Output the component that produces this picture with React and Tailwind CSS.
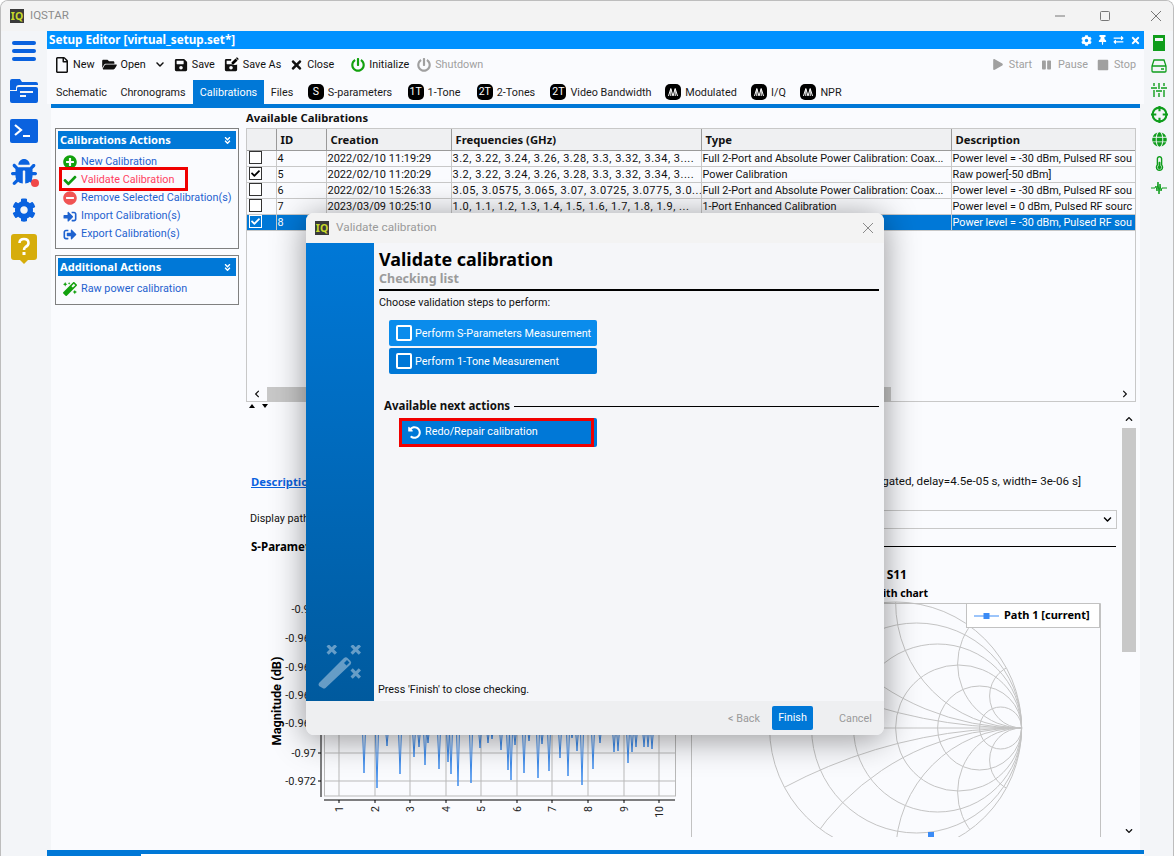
import React from "react";
import {
  FaBug, FaCog, FaPlusCircle, FaCheck, FaMinusCircle, FaSignInAlt, FaSignOutAlt, FaMagic,
  FaRegFile, FaFolderOpen, FaSave, FaTimes, FaPowerOff, FaPlay, FaPause, FaStop, FaPen,
  FaAngleDoubleDown, FaChevronDown, FaThermometerHalf, FaGlobe, FaExchangeAlt, FaThumbtack,
  FaUndoAlt, FaChevronLeft, FaChevronRight, FaChevronUp,
} from "react-icons/fa";

const rows = [
  { id: 4, on: false, date: "2022/02/10 11:19:29", freq: "3.2, 3.22, 3.24, 3.26, 3.28, 3.3, 3.32, 3.34, 3....", type: "Full 2-Port and Absolute Power Calibration: Coax...", desc: "Power level = -30 dBm, Pulsed RF sou" },
  { id: 5, on: true, date: "2022/02/10 11:20:29", freq: "3.2, 3.22, 3.24, 3.26, 3.28, 3.3, 3.32, 3.34, 3....", type: "Power Calibration", desc: "Raw power[-50 dBm]" },
  { id: 6, on: false, date: "2022/02/10 15:26:33", freq: "3.05, 3.0575, 3.065, 3.07, 3.0725, 3.0775, 3.0...", type: "Full 2-Port and Absolute Power Calibration: Coax...", desc: "Power level = -30 dBm, Pulsed RF sou" },
  { id: 7, on: false, date: "2023/03/09 10:25:10", freq: "1.0, 1.1, 1.2, 1.3, 1.4, 1.5, 1.6, 1.7, 1.8, 1.9, ...", type: "1-Port Enhanced Calibration", desc: "Power level = 0 dBm, Pulsed RF sourc" },
  { id: 8, on: true, sel: true, date: "2023/03/09 10:40:12", freq: "1.0, 1.1, 1.2, 1.3", type: "Full 2-Port", desc: "Power level = -30 dBm, Pulsed RF sou" },
];
const cellText = ["", "text-[11px]", "tracking-[0.5px] text-[11px]", "", ""];

// spike tips read off the reference, in page coordinates
const spikes = [
  [364, 772], [377, 787], [387, 745], [400, 773], [414, 756], [419, 746], [425, 764], [428, 742], [439, 768], [448, 761],
  [451, 773], [458, 785], [471, 782], [480, 747], [488, 742], [492, 738], [501, 749], [508, 769], [511, 779], [515, 744],
  [524, 772], [529, 740], [538, 777], [542, 743], [549, 770], [560, 757], [568, 775], [572, 737], [577, 750], [582, 784],
  [593, 768], [600, 742], [614, 751], [618, 750], [628, 762], [632, 751], [636, 746], [644, 746], [648, 746], [652, 748],
];
const spikeLine = spikes.map(([x, y]) => `${x - 1.5},728 ${x},${y} ${x + 1.5},728`).join(" ");

const yLabels = [["-0.96", 608], ["-0.968", 637], ["-0.968", 666], ["-0.968", 694], ["-0.968", 722], ["-0.97", 752], ["-0.972", 780]];
const xTicks = [339, 375, 410, 446, 481, 517, 552, 588, 624, 659];

const CX = 1021.6;
const CY = 727;

function LeftChart() {
  return (
    <svg viewBox="270 600 421 237" className="w-[421px] h-[237px] block">
      <rect x="324.5" y="600" width="351" height="195" fill="none" stroke="#b9b9b9" strokeWidth="1" />
      {xTicks.map((x) => <line key={x} x1={x} x2={x} y1="600" y2="795" stroke="#b9b9b9" />)}
      {yLabels.map(([, y], i) => <line key={i} x1="324" x2="675" y1={y} y2={y} stroke="#b9b9b9" />)}
      <polyline points={spikeLine} fill="none" stroke="#3f8ceb" strokeWidth="1" />
      <line x1="321" x2="321" y1="600" y2="796" stroke="#000" />
      <line x1="324" x2="675" y1="799" y2="799" stroke="#000" />
      {yLabels.map(([t, y], i) => (
        <g key={i}>
          <line x1="318" x2="321" y1={y} y2={y} stroke="#000" />
          <text x="316" y={y + 4} textAnchor="end" fontSize="11" fill="#222">{t}</text>
        </g>
      ))}
      {xTicks.map((x, i) => (
        <g key={x}>
          <line x1={x} x2={x} y1="799" y2="802" stroke="#000" />
          <text transform={`translate(${x + 4} 805) rotate(-90)`} textAnchor="end" fontSize="10.5" fill="#222">{i + 1}</text>
        </g>
      ))}
      <text transform="translate(281 700) rotate(-90)" textAnchor="middle" fontSize="12.800" fontWeight="700" fill="#000">Magnitude (dB)</text>
    </svg>
  );
}

function SmithChart() {
  const rs = [126, 105, 84, 63, 42, 21];
  const xs = [32, 64, 126, 252, 504];
  return (
    <svg viewBox="691 600 430 237" className="w-[430px] h-[237px] block">
      <defs>
        <clipPath id="outer"><circle cx={CX - 126} cy={CY} r="126" /></clipPath>
      </defs>
      <path d="M691.5 837V602.5H1100.5V837" fill="none" stroke="#c2c2c2" />
      <line x1={CX - 252} x2={CX} y1={CY} y2={CY} stroke="#c4c4c4" />
      {rs.map((r) => <circle key={r} cx={CX - r} cy={CY} r={r} fill="none" stroke="#c4c4c4" />)}
      <g clipPath="url(#outer)">
        {xs.map((r) => (
          <g key={r}>
            <circle cx={CX} cy={CY - r} r={r} fill="none" stroke="#c4c4c4" />
            <circle cx={CX} cy={CY + r} r={r} fill="none" stroke="#c4c4c4" />
          </g>
        ))}
      </g>
      <rect x="928" y="831" width="6" height="6" fill="#3b8bf5" />
    </svg>
  );
}

function Waves() {
  return (
    <svg viewBox="0 0 16 16" className="w-4 h-4">
      <path d="M3.500 12 5.800 4.500 8 12 10.200 4.500 12.500 12M5.800 5v7M10.200 5v7" fill="none" stroke="#fff" strokeWidth="1" />
    </svg>
  );
}

function Badge({ children }) {
  return <span className="w-4 h-4 rounded-[5px] bg-black text-white text-[10.5px] leading-4 text-center flex items-center justify-center shrink-0">{children}</span>;
}

function Tab({ badge, children, active, width }) {
  return (
    <div className={`${width} h-full flex items-center justify-center gap-[4px] shrink-0 whitespace-nowrap ${active ? "bg-[#0078d7] text-white" : "text-[#1a1a1a]"}`}>
      {badge && <Badge>{badge}</Badge>}
      <span className="mt-[2px]">{children}</span>
    </div>
  );
}

function ActionBox({ title, height, children }) {
  return (
    <div className={`${height} border border-[#808080] p-[2px]`}>
      <div className="h-[18px] bg-[#0078d7] text-white font-['Noto_Sans',sans-serif] font-bold text-[11.1px] flex items-center justify-between pl-[2px] pr-[4px]">
        <span>{title}</span>
        <FaAngleDoubleDown className="w-[9px] h-[9px]" />
      </div>
      <div className="pt-[4px]">{children}</div>
    </div>
  );
}

function Action({ icon, children, hot }) {
  return (
    <div className={`h-[18px] flex items-center gap-[4px] pl-[4px] whitespace-nowrap ${hot ? "text-[#ff3f62]" : "text-[#1e62cf]"}`}>
      <span className="w-[15px] flex justify-center shrink-0">{icon}</span>
      <span>{children}</span>
    </div>
  );
}

function Check({ on, sel }) {
  return (
    <span className={`block w-[13px] h-[13px] border ${sel ? "border-white bg-[#0078d7] text-white" : "border-[#333] bg-white text-black"} flex items-center justify-center`}>
      {on && <FaCheck className="w-[9px] h-[9px]" />}
    </span>
  );
}

function Tool({ icon, label, dim, className }) {
  return (
    <div className={`flex items-center gap-[4px] shrink-0 ${dim ? "text-[#a0a0a0]" : "text-[#111]"} ${className}`}>
      {icon}
      <span className="mt-[2px]">{label}</span>
    </div>
  );
}

function Logo() {
  return (
    <span className="w-[14px] h-[14px] bg-[#3a3a3a] text-[#c9d92a] font-['Noto_Sans',sans-serif] text-[10.5px] leading-[14px] font-bold flex items-center justify-center shrink-0">IQ</span>
  );
}

function StepButton({ label, bg }) {
  return (
    <div className={`w-[208px] h-[26px] rounded-[2px] ${bg} text-white flex items-center pl-[7px] gap-[3px] whitespace-nowrap`}>
      <span className="w-4 h-4 border-2 border-white rounded-[2px] shrink-0" />
      <span className="mt-[2px]">{label}</span>
    </div>
  );
}

function Modal() {
  return (
    <div className="absolute left-[306px] top-[213px] w-[578px] h-[522px] rounded-[8px] overflow-hidden bg-[#f5f6f9] shadow-[0_4px_34px_rgba(0,0,0,0.42)] flex flex-col">
      <div className="h-[30px] bg-[#f3f3f3] flex items-center pl-[9px] pr-[10px] gap-[7px] shrink-0">
        <Logo />
        <span className="text-[11.8px] text-[#9a9a9a]">Validate calibration</span>
        <svg viewBox="0 0 12 12" className="w-3 h-3 ml-auto"><path d="M1 1l10 10M11 1 1 11" stroke="#8a8a8a" fill="none" /></svg>
      </div>
      <div className="flex-1 flex min-h-0">
        <div className="w-[68px] bg-gradient-to-b from-[#0078d7] to-[#005a9e] flex items-end justify-center pb-[12px] shrink-0">
          <svg viewBox="0 0 44 44" className="w-[44px] h-[44px] text-white/40" fill="currentColor">
            <path d="M2 6l3-3 4 4 4-4 3 3-4 4 4 4-3 3-4-4-4 4-3-3 4-4z" transform="translate(7 -3) scale(.75)" />
            <path d="M2 6l3-3 4 4 4-4 3 3-4 4 4 4-3 3-4-4-4 4-3-3 4-4z" transform="translate(31 -3) scale(.75)" />
            <path d="M2 6l3-3 4 4 4-4 3 3-4 4 4 4-3 3-4-4-4 4-3-3 4-4z" transform="translate(31 21) scale(.75)" />
            <path d="M1 38 26 13q2-1.500 3.500 0l3 3q1.500 1.500 0 3.500L7.500 43q-1.500 1-3 0L1 41q-1-1.500 0-3zM26 18l2.500 2.500 3-3L29 15z" fillRule="evenodd" />
          </svg>
        </div>
        <div className="flex-1 flex flex-col px-[5px] min-w-0">
          <div className="font-['Noto_Sans',sans-serif] text-[17.9px] leading-[24px] font-bold text-black mt-[4px]">Validate calibration</div>
          <div className="font-['Noto_Sans',sans-serif] text-[12.5px] leading-[14px] font-bold text-[#9b9b9b] mt-[1px]">Checking list</div>
          <div className="h-[2px] bg-black mt-[3px] shrink-0" />
          <div className="leading-[15px] text-[#111] mt-[4px]">Choose validation steps to perform:</div>
          <div className="flex flex-col gap-[2px] mt-[10px] ml-[10px]">
            <StepButton label="Perform S-Parameters Measurement" bg="bg-[#0a8cec]" />
            <StepButton label="Perform 1-Tone Measurement" bg="bg-[#0078d7]" />
          </div>
          <div className="flex items-center gap-[4px] ml-[5px] mt-[25px] h-[14px]">
            <span className="font-['Noto_Sans',sans-serif] text-[11.5px] font-bold text-[#111]">Available next actions</span>
            <span className="flex-1 h-px bg-black" />
          </div>
          <div className="relative mt-[5px] ml-[20px] w-[198px] h-[29px] bg-[#0078d7] rounded-[2px] text-white flex items-center gap-[4px] pl-[9px]">
            <FaUndoAlt className="w-[13px] h-[13px]" />
            <span className="-mt-[1px]">Redo/Repair calibration</span>
            <span className="absolute left-0 top-0 w-[195px] h-[29px] border-[3px] border-[#f00000]" />
          </div>
          <div className="mt-auto leading-[15px] text-[#111] mb-[4px] -ml-[1px]">Press 'Finish' to close checking.</div>
        </div>
      </div>
      <div className="h-[34px] bg-[#eeeff1] shrink-0 flex items-center text-[#9a9a9a] whitespace-nowrap">
        <span className="ml-[422px] w-[32px] mt-[2px]">&lt; Back</span>
        <span className="ml-[12px] w-[41px] h-[24px] rounded-[2px] bg-[#0078d7] text-white flex items-center justify-center">Finish</span>
        <span className="ml-[26px] mt-[2px]">Cancel</span>
      </div>
    </div>
  );
}

export default function App() {
  return (
    <div className="relative w-[1174px] h-[856px] overflow-hidden bg-white font-['Roboto','Liberation_Sans',sans-serif] text-[10.8px] text-[#111]">
      <div className="h-full flex flex-col rounded-t-[8px] border-t border-x border-[#bdbdbd] bg-[#f3f5f8] overflow-hidden">
        {/* title bar */}
        <div className="h-[30px] bg-[#f3f3f3] flex items-center pl-[9px] shrink-0">
          <Logo />
          <span className="ml-[6px] text-[11.5px] text-[#8c8c8c]">IQSTAR</span>
          <div className="ml-auto flex items-center text-[#777]">
            <svg viewBox="0 0 10 10" className="w-[10px] h-[10px] mr-[35px]"><path d="M0 5h10" stroke="currentColor" /></svg>
            <svg viewBox="0 0 10 10" className="w-[10px] h-[10px] mr-[41px]"><rect x=".5" y=".5" width="9" height="9" rx="1" fill="none" stroke="currentColor" /></svg>
            <svg viewBox="0 0 10 10" className="w-[10px] h-[10px] mr-[12px]"><path d="M0 0l10 10M10 0 0 10" stroke="currentColor" /></svg>
          </div>
        </div>

        <div className="flex-1 flex min-h-0">
          {/* left rail */}
          <div className="w-[46px] shrink-0 flex flex-col items-center text-[#0a62df] pr-[1px]">
            <svg viewBox="0 0 24 20" className="w-6 h-5 mt-[10px]" fill="currentColor">
              <rect y="0" width="24" height="4" rx="2" /><rect y="8" width="24" height="4" rx="2" /><rect y="16" width="24" height="4" rx="2" />
            </svg>
            <svg viewBox="0 0 28 24" className="w-7 h-6 mt-[18px]" fill="currentColor">
              <path d="M0 2q0-2 2-2h8l2 3h14q2 0 2 2v1H9q-3 0-3 3v2H0z" />
              <path d="M0 12h7V9q0-1 2-1h17q2 0 2 2v12q0 2-2 2H2q-2 0-2-2zM10 12v2h13v-2zM10 16v2h6v-2z" fillRule="evenodd" />
            </svg>
            <svg viewBox="0 0 28 24" className="w-7 h-6 mt-[16px]">
              <rect width="28" height="24" rx="2" fill="currentColor" />
              <path d="M5 6l6 5-6 5" stroke="#fff" strokeWidth="2.200" fill="none" />
              <path d="M13 17h7" stroke="#fff" strokeWidth="2" />
            </svg>
            <div className="relative mt-[15px] w-7 h-7 flex items-center justify-center">
              <FaBug className="w-[26px] h-[26px]" />
              <span className="absolute -right-[1px] -bottom-[1px] w-2 h-2 rounded-full bg-[#f04848]" />
            </div>
            <FaCog className="w-6 h-6 mt-[12px]" />
            <svg viewBox="0 0 26 30" className="w-[26px] h-[30px] mt-[12px]">
              <path d="M3 0h20q3 0 3 3v20q0 3-3 3h-6l-4 4-4-4H3q-3 0-3-3V3q0-3 3-3z" fill="#d6ad0b" />
              <path d="M8.500 9q0-4 4.500-4t4.500 4q0 2.500-3 4-1.500 1-1.500 3" stroke="#fff" strokeWidth="2.600" fill="none" />
              <rect x="11.500" y="18" width="3" height="3" fill="#fff" />
            </svg>
          </div>

          {/* centre */}
          <div className="flex-1 min-w-0 flex flex-col">
            <div className="h-[18px] bg-[#0091ff] text-white font-['Noto_Sans',sans-serif] font-bold text-[11.7px] flex items-center pl-[2px] pr-[3px] shrink-0">
              <span>Setup Editor [virtual_setup.set*]</span>
              <div className="ml-auto flex items-center gap-[6px]">
                <FaCog className="w-[11px] h-[11px]" />
                <FaThumbtack className="w-[9px] h-[10px]" />
                <FaExchangeAlt className="w-[11px] h-[10px]" />
                <FaTimes className="w-[11px] h-[11px]" />
              </div>
            </div>

            <div className="h-[31px] bg-[#fafbfe] flex items-center pl-[8px] pr-[8px] shrink-0">
              <Tool icon={<FaRegFile className="w-[14px] h-[16px]" />} label="New" />
              <Tool icon={<FaFolderOpen className="w-[15px] h-[13px]" />} label="Open" className="ml-[7px]" />
              <FaChevronDown className="w-[10px] h-[9px] ml-[9px] shrink-0" />
              <Tool icon={<FaSave className="w-[14px] h-[14px]" />} label="Save" className="ml-[9px]" />
              <Tool
                icon={
                  <span className="relative w-[15px] h-[15px] shrink-0">
                    <FaSave className="w-[14px] h-[14px] absolute left-0 bottom-0" />
                    <FaPen className="w-[8px] h-[8px] absolute right-0 top-0 text-black bg-white rounded-full" />
                  </span>
                }
                label="Save As"
                className="ml-[9px]"
              />
              <Tool icon={<FaTimes className="w-[13px] h-[14px]" />} label="Close" className="ml-[9px]" />
              <Tool icon={<FaPowerOff className="w-[14px] h-[14px] text-[#13a10e]" />} label="Initialize" className="ml-[17px]" />
              <Tool icon={<FaPowerOff className="w-[14px] h-[14px]" />} label="Shutdown" dim className="ml-[8px]" />
              <div className="ml-auto flex items-center">
                <Tool icon={<FaPlay className="w-[10px] h-[11px] mr-[2px]" />} label="Start" dim />
                <Tool icon={<FaPause className="w-[9px] h-[12px] mr-[3px]" />} label="Pause" dim className="ml-[10px]" />
                <Tool icon={<FaStop className="w-[12px] h-[12px] mr-[1px]" />} label="Stop" dim className="ml-[9px]" />
              </div>
            </div>

            <div className="h-[24px] bg-[#fafbfe] flex items-center pl-[3px] shrink-0">
              <Tab width="w-[63px]">Schematic</Tab>
              <Tab width="w-[80px]">Chronograms</Tab>
              <Tab width="w-[71px]" active>Calibrations</Tab>
              <Tab width="w-[36px]">Files</Tab>
              <Tab width="w-[100px]" badge="S">S-parameters</Tab>
              <Tab width="w-[68px]" badge="1T">1-Tone</Tab>
              <Tab width="w-[76px]" badge="2T">2-Tones</Tab>
              <Tab width="w-[114px]" badge="2T">Video Bandwidth</Tab>
              <Tab width="w-[86px]" badge={<Waves />}>Modulated</Tab>
              <Tab width="w-[49px]" badge={<Waves />}>I/Q</Tab>
              <Tab width="w-[56px]" badge={<Waves />}>NPR</Tab>
            </div>

            <div className="flex-1 min-h-0 flex flex-col">
              <div className="ml-[4px] mr-[4px] flex-1 min-h-0 flex flex-col bg-[#fafbfe]">
                <div className="h-1 bg-[#0078d7] shrink-0" />
                <div className="flex-1 flex min-h-0">
                  {/* action panel */}
                  <div className="w-[195px] pl-[4px] pr-[7px] pt-[20px] flex flex-col gap-[6px] shrink-0">
                    <ActionBox title="Calibrations Actions" height="h-[121px]">
                      <Action icon={<FaPlusCircle className="w-[14px] h-[14px] text-[#13a10e]" />}>New Calibration</Action>
                      <div className="relative">
                        <Action hot icon={<FaCheck className="w-[14px] h-[13px] text-[#0f9a10]" />}>Validate Calibration</Action>
                        <span className="absolute left-[1px] -top-[4px] w-[129px] h-[24px] border-[3px] border-[#f00000]" />
                      </div>
                      <Action icon={<FaMinusCircle className="w-[14px] h-[14px] text-[#f05454]" />}>Remove Selected Calibration(s)</Action>
                      <Action icon={<FaSignInAlt className="w-[14px] h-[13px] text-[#1e62cf]" />}>Import Calibration(s)</Action>
                      <Action icon={<FaSignOutAlt className="w-[14px] h-[13px] text-[#1e62cf]" />}>Export Calibration(s)</Action>
                    </ActionBox>
                    <ActionBox title="Additional Actions" height="h-[50px]">
                      <Action icon={<FaMagic className="w-[14px] h-[14px] text-[#13a10e]" />}>Raw power calibration</Action>
                    </ActionBox>
                  </div>

                  {/* main column */}
                  <div className="flex-1 min-w-0 flex flex-col">
                    <div className="h-[20px] font-['Noto_Sans',sans-serif] font-bold text-[11.25px] flex items-center shrink-0">Available Calibrations</div>
                    <div className="w-[890px] h-[274px] border border-[#c8c8c8] shrink-0 flex flex-col overflow-hidden">
                      <table className="w-[889px] table-fixed border-collapse leading-[15px]">
                        <colgroup>
                          <col className="w-[29px]" /><col className="w-[50px]" /><col className="w-[125px]" />
                          <col className="w-[250px]" /><col className="w-[250px]" /><col className="w-[185px]" />
                        </colgroup>
                        <thead>
                          <tr className="h-[21px] bg-[#eff0f2] font-['Noto_Sans',sans-serif] text-[11.25px] text-left">
                            {["", "ID", "Creation", "Frequencies (GHz)", "Type", "Description"].map((h) => (
                              <th key={h} className="border-r border-b border-[#9a9a9a] pl-[4px] font-bold whitespace-nowrap">{h}</th>
                            ))}
                          </tr>
                        </thead>
                        <tbody>
                          {rows.map((r) => (
                            <tr key={r.id} className={`h-[16px] ${r.sel ? "bg-[#0078d7] text-white" : ""}`}>
                              <td className="border-r border-b border-[#c8c8c8] pl-[2px] p-0 align-top"><Check on={r.on} sel={r.sel} /></td>
                              {[r.id, r.date, r.freq, r.type, r.desc].map((v, i) => (
                                <td key={i} className={`border-r border-b border-[#c8c8c8] pl-[1px] p-0 whitespace-nowrap overflow-hidden ${cellText[i]}`}>{v}</td>
                              ))}
                            </tr>
                          ))}
                        </tbody>
                      </table>
                      <div className="mt-auto h-[14px] flex items-center shrink-0">
                        <div className="w-[20px] flex justify-center"><FaChevronLeft className="w-[8px] h-[8px]" /></div>
                        <div className="w-[624px] h-full bg-[#c8c8c8]" />
                        <div className="ml-auto w-[20px] flex justify-center"><FaChevronRight className="w-[8px] h-[8px]" /></div>
                      </div>
                    </div>
                    <div className="h-[6px] flex items-center gap-[7px] pl-[3px] shrink-0 mt-[1px]">
                      <span className="w-0 h-0 border-x-[3px] border-x-transparent border-b-[4px] border-b-black" />
                      <span className="w-0 h-0 border-x-[3px] border-x-transparent border-t-[4px] border-t-black" />
                    </div>

                    {/* detail pane */}
                    <div className="h-[428px] flex shrink-0 overflow-hidden">
                      <div className="w-[876px] pl-[5px] flex flex-col">
                        <div className="mt-[65px] h-[16px] flex items-center justify-between pr-[41px] shrink-0">
                          <span className="font-['Noto_Sans',sans-serif] font-bold text-[#0a62df] underline text-[11.25px]">Description:</span>
                          <span className="text-[11.6px]">Power level = -30 dBm, Pulsed RF source, gated, delay=4.5e-05 s, width= 3e-06 s]</span>
                        </div>
                        <div className="mt-[20px] h-[19px] flex items-center gap-[8px] pr-[5px] shrink-0">
                          <span className="-ml-[1px]">Display path</span>
                          <div className="flex-1 h-[19px] border border-[#c8c8c8] flex items-center justify-end pr-[4px]">
                            <FaChevronDown className="w-[9px] h-[9px] text-black" />
                          </div>
                        </div>
                        <div className="mt-[8px] h-[18px] flex items-center gap-[8px] pr-[6px] shrink-0">
                          <span className="mt-[2px] font-['Noto_Sans',sans-serif] font-bold text-[11.5px] text-black">S-Parameters</span>
                          <span className="flex-1 h-px bg-black" />
                        </div>
                        <div className="mt-[11px] h-[16px] pr-[215px] text-right font-['Noto_Sans',sans-serif] font-bold text-[12px] text-black shrink-0">Measurement S11</div>
                        <div className="mt-[4px] h-[15px] pr-[194px] text-right font-['Noto_Sans',sans-serif] font-bold text-[10.5px] text-black shrink-0">Smith chart</div>
                        <div className="flex -ml-[5px] pl-[24px] relative shrink-0">
                          <LeftChart />
                          <SmithChart />
                          <div className="absolute left-[720px] top-[2px] w-[134px] h-[25px] bg-white border border-[#c2c2c2] flex items-center pl-[7px] gap-[5px] font-['Noto_Sans',sans-serif] font-bold text-[11px] text-black">
                            <svg viewBox="0 0 25 6" className="w-[25px] h-[6px]"><path d="M0 3h25" stroke="#3b8bf5" /><rect x="9.500" y="0" width="6" height="6" fill="#3b8bf5" /></svg>
                            <span>Path 1 [current]</span>
                          </div>
                        </div>
                      </div>
                      <div className="w-[14px] flex flex-col items-center shrink-0">
                        <div className="h-[19px] flex items-center justify-center shrink-0"><FaChevronUp className="w-[8px] h-[8px]" /></div>
                        <div className="w-full h-[224px] bg-[#c8c8c8] shrink-0" />
                        <div className="mt-auto h-[12px] flex items-center justify-center shrink-0"><FaChevronDown className="w-[8px] h-[8px]" /></div>
                      </div>
                    </div>
                  </div>
                </div>
              </div>
              <div className="h-[14px] mx-[4px] bg-[#fafbfe] shrink-0" />
              <div className="h-[4px] bg-[#0078d7] shrink-0" />
              <div className="h-[2px] bg-white shrink-0"><div className="w-[94px] h-full bg-[#0078d7]" /></div>
            </div>
          </div>

          {/* right rail */}
          <div className="w-[29px] shrink-0 flex flex-col items-center pl-[1px] text-[#0f9d1c]">
            <svg viewBox="0 0 16 16" className="w-4 h-4 mt-[4px]" fill="currentColor"><path d="M2 0h12v16H2zM4 3v3h8V3z" fillRule="evenodd" /></svg>
            <svg viewBox="0 0 16 14" className="w-4 h-[14px] mt-[8px]" fill="none" stroke="currentColor" strokeWidth="1.300"><path d="M3 1h10l2 6v5q0 1-1 1H2q-1 0-1-1V7zM1 7h14" /><path d="M10 10h3" /></svg>
            <svg viewBox="0 0 16 14" className="w-4 h-[14px] mt-[10px]" fill="none" stroke="currentColor" strokeWidth="1.400"><path d="M3 0v3M3 7v7M8 0v6M8 10v4M13 0v3M13 7v7M0 5h6M5 8h6M10 5h6" /></svg>
            <svg viewBox="0 0 16 16" className="w-[17px] h-[17px] mt-[9px]" fill="none" stroke="currentColor" strokeWidth="2"><circle cx="8" cy="8" r="6.500" /><path d="M8 0v5M8 11v5M0 8h5M11 8h5" /></svg>
            <FaGlobe className="w-[15px] h-[15px] mt-[9px]" />
            <FaThermometerHalf className="w-[15px] h-[15px] mt-[9px]" />
            <svg viewBox="0 0 16 14" className="w-4 h-[14px] mt-[10px]" fill="none" stroke="currentColor"><path d="M0 7h4l1-2 1 5 1-9 1 12 1-10 1 7 1-3h5" /></svg>
          </div>
        </div>
      </div>
      <Modal />
    </div>
  );
}
